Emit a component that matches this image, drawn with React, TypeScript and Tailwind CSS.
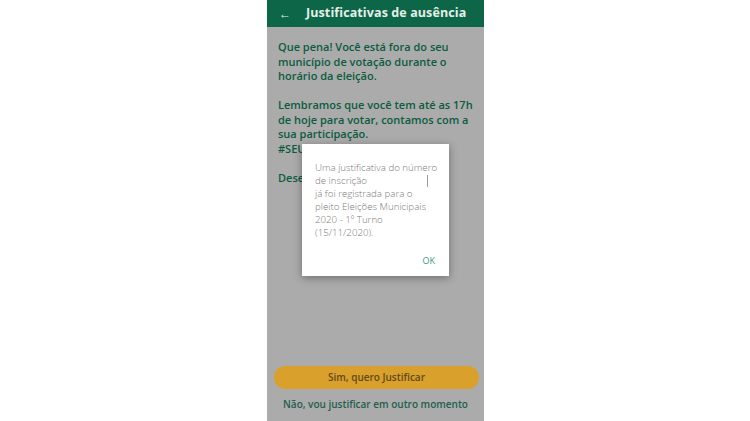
import React from 'react';

export default function App() {
  return (
    <div className="w-[750px] h-[421px] bg-white flex justify-center" style={{ fontFamily: '"Open Sans", sans-serif' }}>
      <div className="relative w-[217px] h-full ml-[1px] flex flex-col bg-[#ababab] overflow-hidden">
        <header className="h-[27px] bg-[#0d6647] flex items-center px-[12px] gap-[15px] text-[#e6efe9] shrink-0">
          <span className="text-[12px] leading-none">&larr;</span>
          <h1 className="text-[12.5px] font-bold tracking-[0.1px]">Justificativas de ausência</h1>
        </header>
        <main className="flex-1 flex flex-col px-[11px] pt-[13px] pb-[9px]">
          <div className="text-[11px] leading-[14.5px] font-semibold text-[#0c5b3f] flex-1">
            <p>Que pena! Você está fora do seu município de votação durante o horário da eleição.</p>
            <p className="mt-[14.5px]">
              Lembramos que você tem até as 17h de hoje para votar, contamos com a sua participação.
              <br />
              #SEUVOTOFAZADIFERENÇA
            </p>
            <p className="mt-[14.5px]">Deseja justificar sua ausência?</p>
          </div>
          <button className="h-[23px] w-[205px] -ml-[4px] rounded-full bg-[#d9a12b] text-[10px] font-semibold text-[#62481a] mb-[8px]">
            Sim, quero Justificar
          </button>
          <button className="text-[10px] font-semibold text-[#1f5e4f] text-center">
            Não, vou justificar em outro momento
          </button>
        </main>
        <div className="absolute left-[35px] top-[144px] w-[147px] h-[132px] bg-white shadow-[0_2px_8px_rgba(0,0,0,0.35)] flex flex-col pl-[13px] pr-[10px] pt-[17px] pb-[9px]">
          <p className="text-[9.7px] leading-[13px] font-light text-[#7a7a7a]">
            Uma justificativa do número de inscrição
            <span className="inline-block align-top w-[60px] h-[12px] border-r border-[#9a9a9a] ml-[1px] mt-[1px]" />
            <br />
            já foi registrada para o pleito Eleições Municipais 2020 - 1º Turno (15/11/2020).
          </p>
          <div className="mt-auto flex justify-end">
            <span className="text-[9px] text-[#3f9a86] pr-[4px]">OK</span>
          </div>
        </div>
      </div>
    </div>
  );
}
